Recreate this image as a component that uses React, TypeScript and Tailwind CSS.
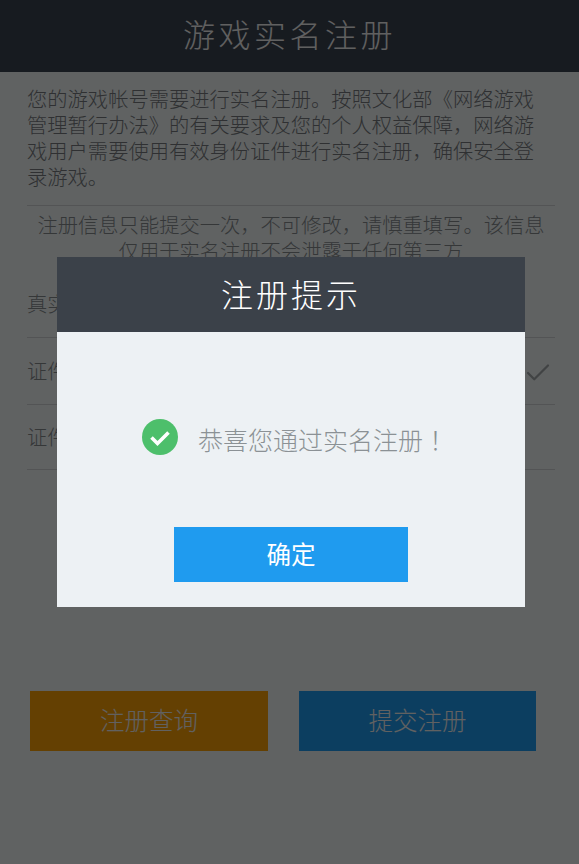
import { Check } from "lucide-react";

const rows = ["真实姓名", "证件类型", "证件号码"];

export default function App() {
    return (
        <div className="relative h-[864px] w-[579px] overflow-hidden bg-[#f0f5f5] font-['Noto_Sans_CJK_SC',sans-serif]">
            <div className="flex h-[72px] items-center justify-center bg-[#3a4450] pb-[7px] text-[32px] font-light tracking-[3.5px] text-[#f0f0f0]">
                游戏实名注册
            </div>

            <div className="pl-[27px] pr-[24px] pt-[13px]">
                <p className="w-[512px] text-[20.3px] font-light leading-[26px] text-[#75797d]">
                    您的游戏帐号需要进行实名注册。按照文化部《网络游戏管理暂行办法》的有关要求及您的个人权益保障，网络游戏用户需要使用有效身份证件进行实名注册，确保安全登录游戏。
                </p>
                <div className="mt-[16px] border-t border-[#cfd2d4] pt-[5px] text-center text-[20.3px] font-light leading-[26px] text-[#85898d]">
                    <p>注册信息只能提交一次，不可修改，请慎重填写。该信息</p>
                    <p>仅用于实名注册不会泄露于任何第三方</p>
                </div>
                <div className="mt-[8px]">
                    {rows.map((r, i) => (
                        <div
                            key={r}
                            className={`flex items-center justify-between border-b border-[#cfd2d4] pb-[2px] text-[20.3px] font-light text-[#85898d] ${i === 2 ? "h-[65px]" : "h-[67px]"}`}
                        >
                            <span>{r}</span>
                            {i === 1 && <Check size={30} strokeWidth={1.8} className="mr-[2px] mt-[6px] text-[#a4a8aa]" />}
                        </div>
                    ))}
                </div>
                <div className="mt-[221px] flex gap-[31px] pl-[3px]">
                    <button className="h-[60px] w-[238px] bg-[#fba107] pb-[2px] text-[24.5px] font-light text-[#f2f2f2]">注册查询</button>
                    <button className="h-[60px] w-[237px] bg-[#1f9bef] pb-[2px] text-[24.5px] font-light text-[#f2f2f2]">提交注册</button>
                </div>
            </div>

            {/* dim layer + dialog */}
            <div className="absolute inset-0 flex items-center bg-black/60 pl-[57px]">
                <div className="h-[350px] w-[468px] bg-[#edf1f4]">
                    <div className="flex h-[75px] items-center justify-center bg-[#3b4149] pb-[4px] text-[32px] font-light tracking-[3px] text-white">
                        注册提示
                    </div>
                    <div className="flex h-[195px] items-center pl-[85px] pt-[15px]">
                        <svg width="36" height="36" viewBox="0 0 36 36" className="shrink-0">
                            <circle cx="18" cy="18" r="18" fill="#4dbf6b" />
                            <path d="M9.5 18.5l6 6 11-11" fill="none" stroke="#fff" strokeWidth="3.6" />
                        </svg>
                        <span className="ml-[20px] mt-[5px] whitespace-nowrap text-[25px] font-light text-[#8b9195]">
                            恭喜您通过实名注册<span className="font-['Noto_Sans_CJK_TC',sans-serif]">！</span>
                        </span>
                    </div>
                    <div className="flex justify-center">
                        <button className="h-[55px] w-[234px] bg-[#1f9bef] text-[24.5px] text-white">确定</button>
                    </div>
                </div>
            </div>
        </div>
    );
}
